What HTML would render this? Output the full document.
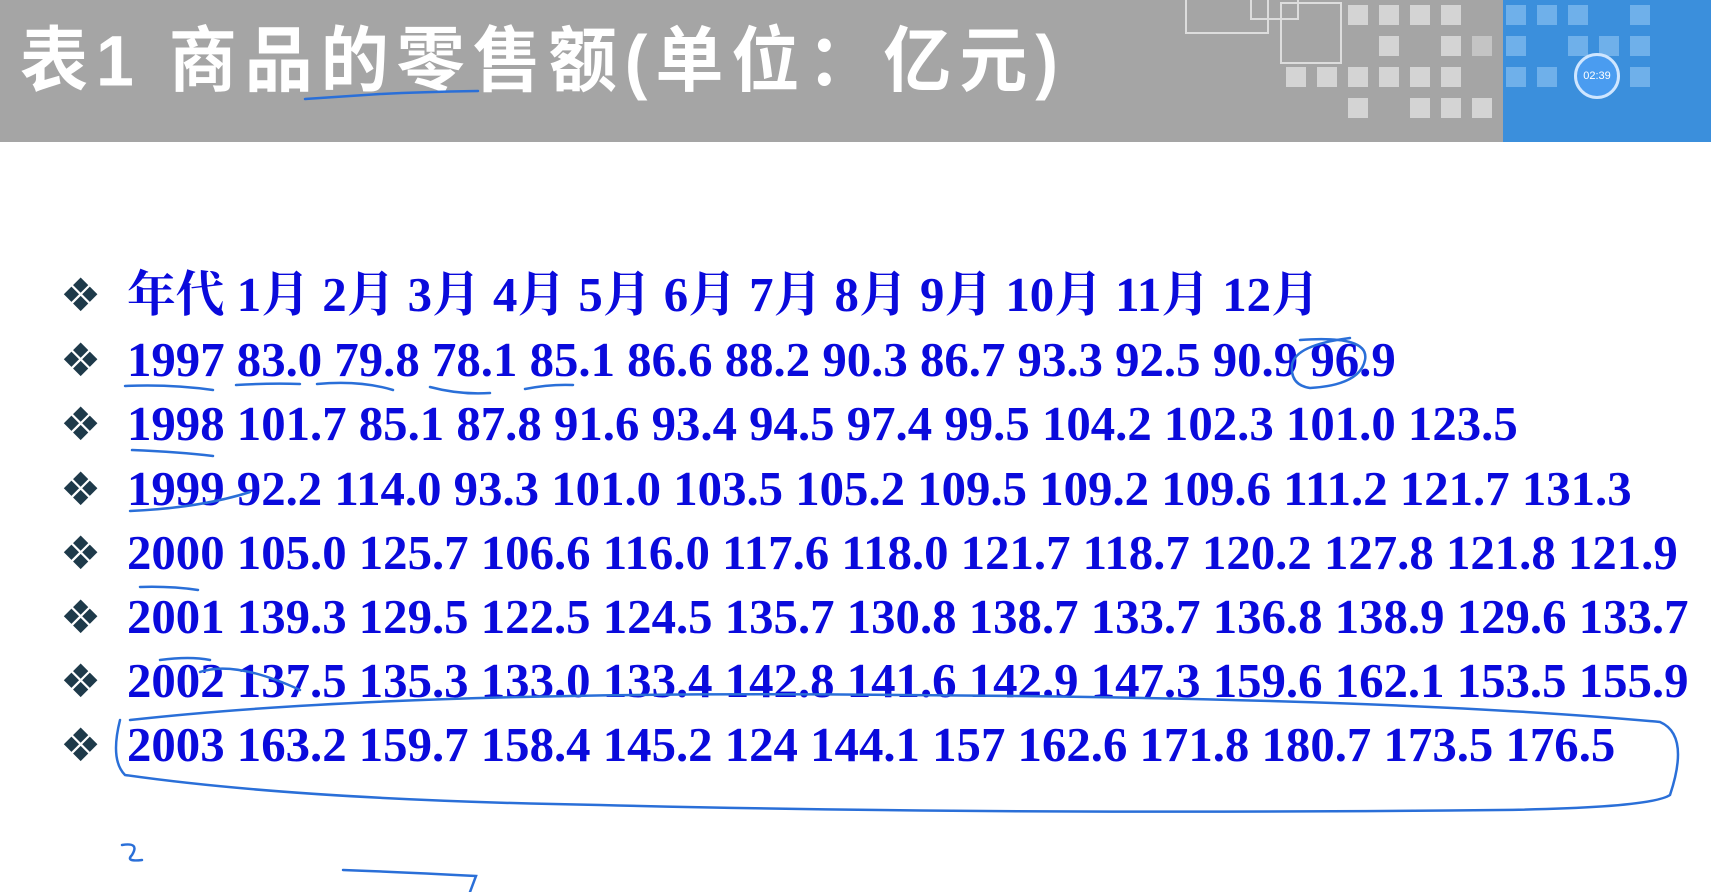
<!DOCTYPE html>
<html><head><meta charset="utf-8"><style>
body{margin:0;width:1711px;height:892px;background:#fff;position:relative;overflow:hidden}
#hdr{position:absolute;left:0;top:0;width:1503px;height:142px;background:#a5a5a5}
#blue{position:absolute;left:1503px;top:0;width:208px;height:142px;background:#3b8fdc}
.sq{position:absolute;width:20px;height:20px;background:#d4d4d4}
.bq{position:absolute;width:20px;height:20px;background:#6fb0ea}
#title{position:absolute;left:20px;top:5px;font:bold 68px "Liberation Sans","Noto Sans CJK SC",sans-serif;color:#fff;letter-spacing:8px;white-space:nowrap;transform:scaleY(1.05)}
.row{position:absolute;left:127px;font:bold 48.8px "Liberation Serif","Noto Serif CJK SC",serif;color:#0a0adc;white-space:nowrap;line-height:56px}
.b{position:absolute;left:60px;font:46px "DejaVu Sans",sans-serif;color:#1e3a4a;line-height:56px}
</style></head><body>
<div id="hdr"></div><div id="blue"></div>
<div style="position:absolute;left:1185px;top:0;width:80px;height:32px;border:2px solid #ddd;border-top:none"></div>
<div style="position:absolute;left:1250px;top:0;width:45px;height:18px;border:2px solid #ddd;border-top:none"></div>
<div style="position:absolute;left:1280px;top:2px;width:58px;height:58px;border:2px solid #ddd"></div>
<div class="sq" style="left:1348px;top:5px"></div><div class="sq" style="left:1379px;top:5px"></div><div class="sq" style="left:1410px;top:5px"></div><div class="sq" style="left:1441px;top:5px"></div>
<div class="sq" style="left:1379px;top:36px"></div><div class="sq" style="left:1441px;top:36px"></div><div class="sq" style="left:1472px;top:36px;background:#c4c4c4"></div>
<div class="sq" style="left:1286px;top:67px"></div><div class="sq" style="left:1317px;top:67px"></div><div class="sq" style="left:1348px;top:67px"></div><div class="sq" style="left:1379px;top:67px"></div><div class="sq" style="left:1410px;top:67px"></div><div class="sq" style="left:1441px;top:67px"></div>
<div class="sq" style="left:1348px;top:98px"></div><div class="sq" style="left:1410px;top:98px"></div><div class="sq" style="left:1441px;top:98px"></div><div class="sq" style="left:1472px;top:98px"></div>
<div class="bq" style="left:1506px;top:5px"></div><div class="bq" style="left:1537px;top:5px"></div><div class="bq" style="left:1568px;top:5px"></div><div class="bq" style="left:1630px;top:5px"></div>
<div class="bq" style="left:1506px;top:36px"></div><div class="bq" style="left:1568px;top:36px"></div><div class="bq" style="left:1599px;top:36px"></div><div class="bq" style="left:1630px;top:36px"></div>
<div class="bq" style="left:1506px;top:67px"></div><div class="bq" style="left:1537px;top:67px"></div><div class="bq" style="left:1630px;top:67px"></div>
<div style="position:absolute;left:1574px;top:53px;width:40px;height:40px;border-radius:50%;background:#4a9cf0;border:3px solid #cfe6ff;color:#fff;font:11px 'Liberation Sans',sans-serif;text-align:center;line-height:40px">02:39</div>
<div id="title">表1 商品的零售额(单位：亿元)</div>
<div class="b" style="top:267px">❖</div><div class="row" style="top:267px">年代 1月 2月 3月 4月 5月 6月 7月 8月 9月 10月 11月 12月</div>
<div class="b" style="top:332px">❖</div><div class="row" style="top:332px">1997 83.0 79.8 78.1 85.1 86.6 88.2 90.3 86.7 93.3 92.5 90.9 96.9</div>
<div class="b" style="top:396px">❖</div><div class="row" style="top:396px">1998 101.7 85.1 87.8 91.6 93.4 94.5 97.4 99.5 104.2 102.3 101.0 123.5</div>
<div class="b" style="top:461px">❖</div><div class="row" style="top:461px">1999 92.2 114.0 93.3 101.0 103.5 105.2 109.5 109.2 109.6 111.2 121.7 131.3</div>
<div class="b" style="top:525px">❖</div><div class="row" style="top:525px">2000 105.0 125.7 106.6 116.0 117.6 118.0 121.7 118.7 120.2 127.8 121.8 121.9</div>
<div class="b" style="top:589px">❖</div><div class="row" style="top:589px">2001 139.3 129.5 122.5 124.5 135.7 130.8 138.7 133.7 136.8 138.9 129.6 133.7</div>
<div class="b" style="top:653px">❖</div><div class="row" style="top:653px">2002 137.5 135.3 133.0 133.4 142.8 141.6 142.9 147.3 159.6 162.1 153.5 155.9</div>
<div class="b" style="top:717px">❖</div><div class="row" style="top:717px">2003 163.2 159.7 158.4 145.2 124 144.1 157 162.6 171.8 180.7 173.5 176.5</div>
<svg width="1711" height="892" style="position:absolute;left:0;top:0" fill="none" stroke="#2a6fd8" stroke-width="2.5" stroke-linecap="round">
<path d="M305 99 Q350 96 380 94 Q420 92 478 91"/>
<path d="M125 386 Q170 384 213 390"/><path d="M236 385 Q270 383 300 384"/><path d="M317 384 Q360 380 393 390"/><path d="M430 387 Q460 395 490 393"/><path d="M525 389 Q550 384 573 385"/>
<path d="M132 450 Q180 452 213 456"/>
<path d="M1300 340 Q1370 335 1365 360 Q1360 385 1310 388 Q1290 385 1292 365 Q1295 345 1350 338"/>
<path d="M130 511 Q200 508 250 492"/>
<path d="M140 587 Q170 586 198 590"/>
<path d="M160 660 Q190 656 210 660"/><path d="M200 672 Q235 660 300 690"/>
<path d="M130 720 Q400 690 900 695 Q1400 698 1660 722 Q1690 735 1670 795 Q1650 808 1500 810 Q1000 815 600 805 Q300 800 125 775 Q110 760 120 720"/>
<path d="M122 845 Q140 842 132 855 Q125 862 142 860"/>
<path d="M343 870 Q400 872 476 876 L470 892"/>
</svg>
</body></html>
